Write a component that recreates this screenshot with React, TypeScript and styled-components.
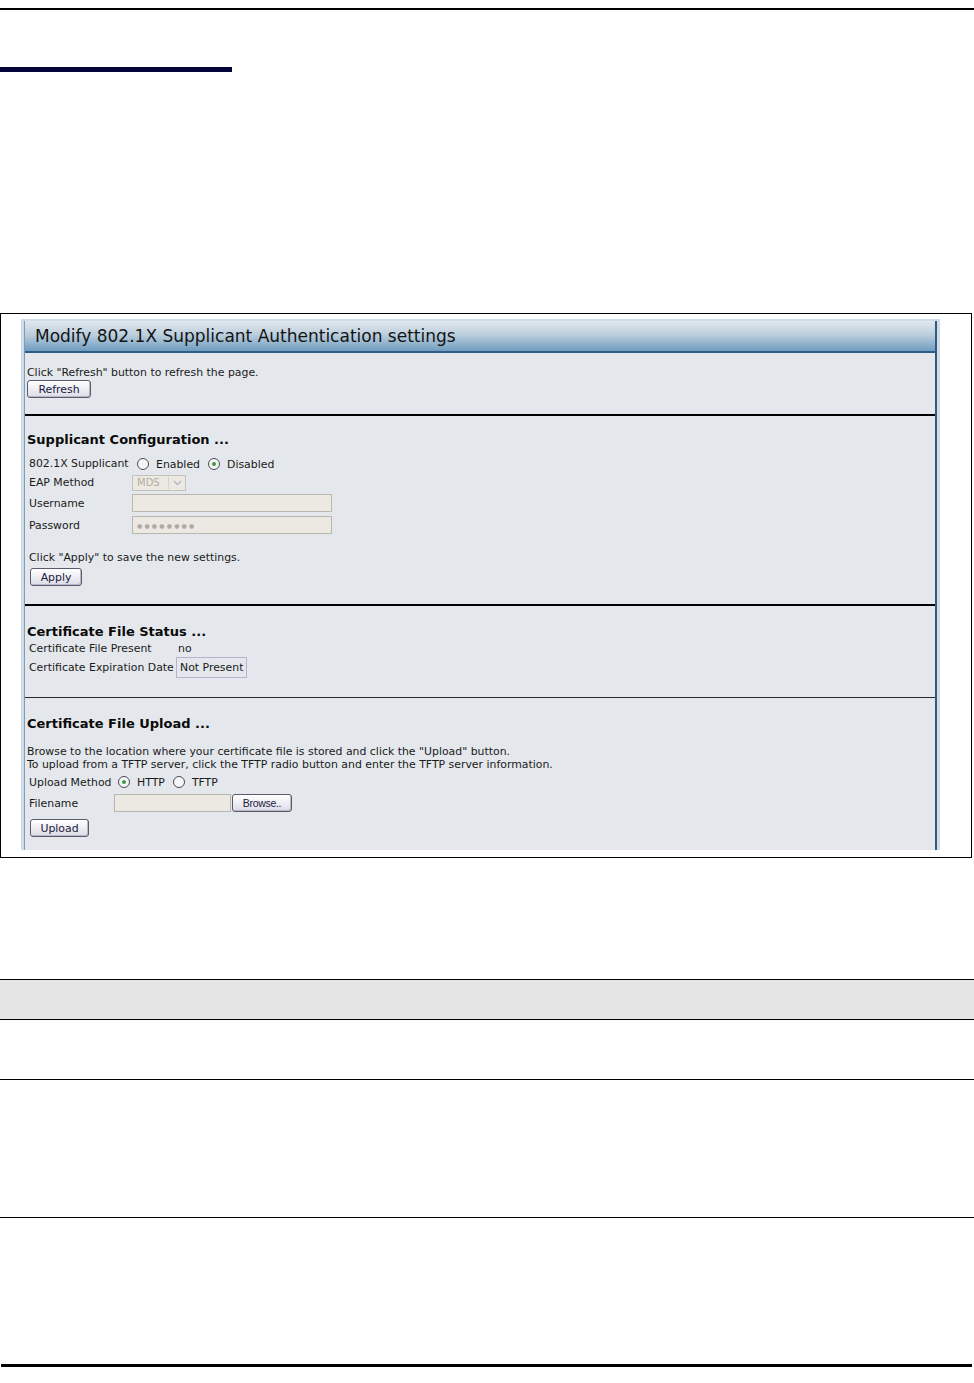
import { FunctionComponent } from "react";
import styled, { createGlobalStyle } from "styled-components";

const GlobalStyle = createGlobalStyle`
    html, body {
        margin: 0;
        padding: 0;
        background: #ffffff;
    }
    body {
        font-family: "DejaVu Sans", Verdana, sans-serif;
        color: #111111;
    }
`;

const Page = styled.div`
    width: 974px;
    height: 1383px;
    display: flex;
    flex-direction: column;
    overflow: hidden;
`;

const TopRule = styled.div`
    margin-top: 8px;
    height: 2px;
    background: #000000;
`;

const ChapterBar = styled.div`
    margin-top: 57px;
    width: 232px;
    height: 5px;
    background: #05053a;
`;

const Figure = styled.div`
    margin-top: 241px;
    box-sizing: border-box;
    width: 972px;
    height: 545px;
    border: 1px solid #000000;
    padding: 5px 0 0 20px;
`;

const Panel = styled.div`
    width: 919px;
    height: 531px;
    box-sizing: border-box;
    padding: 2px 3px 0 3px;
    background: #cfdcea;
    overflow: hidden;
`;

const PanelInner = styled.div`
    height: 100%;
    background: #e4e8ec;
    border-left: 1px solid #7f9dba;
    border-right: 2px solid #35597c;
    display: flex;
    flex-direction: column;
`;

const TitleBar = styled.div`
    height: 30px;
    display: flex;
    align-items: center;
    padding-left: 10px;
    font-size: 17px;
    color: #141414;
    background: linear-gradient(#e2e8ee 0%, #bccfdd 45%, #6f9cc0 100%);
    border-bottom: 2px solid #2e5e85;
`;

const Body = styled.div`
    padding: 0 0 0 2px;
    display: flex;
    flex-direction: column;
`;

const Note = styled.div<{ $top?: number; $indent?: number }>`
    margin-top: ${(p) => p.$top ?? 0}px;
    padding-left: ${(p) => p.$indent ?? 0}px;
    font-size: 10.9px;
    line-height: 13px;
    color: #1a1a1a;
`;

const Button = styled.button<{ $width: number; $top?: number; $indent?: number }>`
    margin-top: ${(p) => p.$top ?? 0}px;
    margin-left: ${(p) => p.$indent ?? 0}px;
    width: ${(p) => p.$width}px;
    height: 18px;
    padding: 0;
    font-family: "DejaVu Sans", Verdana, sans-serif;
    font-size: 10.9px;
    color: #1a1a3a;
    background: linear-gradient(#ffffff, #dcdce8);
    border: 1px solid #5a5a6a;
    border-radius: 3px;
    box-shadow: inset -1px -1px 0 #b8b8c8;
`;

const Divider = styled.div<{ $top: number; $thin?: boolean }>`
    margin-top: ${(p) => p.$top}px;
    margin-left: -2px;
    height: ${(p) => (p.$thin ? 1 : 2)}px;
    background: ${(p) => (p.$thin ? "#2a2a2a" : "#000000")};
`;

const SectionTitle = styled.div<{ $top: number }>`
    margin-top: ${(p) => p.$top}px;
    font-size: 13px;
    font-weight: 700;
    line-height: 16px;
    color: #0a0a0a;
`;

const FieldGrid = styled.div<{ $top: number; $label: number; $rows: string }>`
    margin-top: ${(p) => p.$top}px;
    padding-left: 2px;
    display: grid;
    grid-template-columns: ${(p) => p.$label}px 1fr;
    grid-auto-rows: ${(p) => p.$rows};
    align-items: center;
    font-size: 10.9px;
    color: #1a1a1a;
`;

const FieldValue = styled.div<{ $offset?: number }>`
    display: flex;
    align-items: center;
    padding-left: ${(p) => p.$offset ?? 0}px;
`;

const RadioCircle = styled.span<{ $checked?: boolean }>`
    position: relative;
    flex: none;
    width: 12px;
    height: 12px;
    box-sizing: border-box;
    border: 1px solid #4a4a58;
    border-radius: 50%;
    background: #f6f6f6;
    margin-right: 7px;

    &::after {
        content: "";
        display: ${(p) => (p.$checked ? "block" : "none")};
        position: absolute;
        left: 3px;
        top: 3px;
        width: 4px;
        height: 4px;
        border-radius: 50%;
        background: #3a9c40;
    }
`;

const RadioText = styled.span`
    margin-right: 8px;
    margin-top: 1px;
`;

const DisabledSelect = styled.div`
    width: 54px;
    height: 16px;
    box-sizing: border-box;
    border: 1px solid #c6c2ba;
    background: #ece9e3;
    display: flex;
    align-items: center;
    font-size: 10px;
    color: #b4aca2;
    padding-left: 4px;
`;

const SelectArrow = styled.span`
    margin-left: auto;
    width: 16px;
    height: 12px;
    border-left: 1px solid #d6d2ca;
    display: flex;
    align-items: center;
    justify-content: center;
`;

const TextBox = styled.div<{ $width: number }>`
    width: ${(p) => p.$width}px;
    height: 18px;
    box-sizing: border-box;
    border: 1px solid #bab6b0;
    background: #ece9e3;
    font-size: 6px;
    letter-spacing: 2.2px;
    color: #b0aaa4;
    display: flex;
    align-items: center;
    padding-left: 4px;
`;

const ValueBox = styled.span`
    margin-left: -2px;
    padding: 3px 3px;
    border: 1px solid #b4b4cc;
`;

const BrowseButton = styled(Button)`
    margin-left: 1px;
    font-family: "Liberation Sans Narrow", "Liberation Sans", Arial, sans-serif;
    font-size: 10.5px;
    letter-spacing: -0.3px;
`;

const DocTable = styled.div`
    margin-top: 121px;
    display: flex;
    flex-direction: column;
`;

const DocRow = styled.div<{ $height: number; $head?: boolean }>`
    height: ${(p) => p.$height}px;
    border-top: 1px solid #000000;
    background: ${(p) => (p.$head ? "#e5e5e5" : "#ffffff")};
`;

const DocEnd = styled.div`
    border-top: 1px solid #000000;
`;

const BottomRule = styled.div`
    margin-top: 146px;
    margin-left: 1px;
    width: 971px;
    height: 3px;
    background: #000000;
`;

const Radio: FunctionComponent<{ label: string; checked?: boolean }> = ({ label, checked }) => (
    <>
        <RadioCircle $checked={checked} />
        <RadioText>{label}</RadioText>
    </>
);

export default function App() {
    return (
        <Page>
            <GlobalStyle />
            <TopRule />
            <ChapterBar />
            <Figure>
                <Panel>
                    <PanelInner>
                        <TitleBar>Modify 802.1X Supplicant Authentication settings</TitleBar>
                        <Body>
                            <Note $top={13}>Click "Refresh" button to refresh the page.</Note>
                            <Button $width={64} $top={1}>
                                Refresh
                            </Button>
                            <Divider $top={16} />

                            <SectionTitle $top={16}>Supplicant Configuration ...</SectionTitle>
                            <FieldGrid $top={6} $label={103} $rows="19px 19px 22px 22px">
                                <span>802.1X Supplicant</span>
                                <FieldValue $offset={5}>
                                    <Radio label="Enabled" />
                                    <Radio label="Disabled" checked />
                                </FieldValue>
                                <span>EAP Method</span>
                                <FieldValue>
                                    <DisabledSelect>
                                        MDS
                                        <SelectArrow>
                                            <svg width="9" height="6" viewBox="0 0 9 6">
                                                <path d="M1 1 L4.5 4.5 L8 1" fill="none" stroke="#b6b2c6" strokeWidth="1.3" />
                                            </svg>
                                        </SelectArrow>
                                    </DisabledSelect>
                                </FieldValue>
                                <span>Username</span>
                                <FieldValue>
                                    <TextBox $width={200} />
                                </FieldValue>
                                <span>Password</span>
                                <FieldValue>
                                    <TextBox $width={200}>&#9679;&#9679;&#9679;&#9679;&#9679;&#9679;&#9679;&#9679;</TextBox>
                                </FieldValue>
                            </FieldGrid>
                            <Note $top={15} $indent={2}>
                                Click "Apply" to save the new settings.
                            </Note>
                            <Button $width={52} $top={4} $indent={3}>
                                Apply
                            </Button>
                            <Divider $top={18} />

                            <SectionTitle $top={18}>Certificate File Status ...</SectionTitle>
                            <FieldGrid $top={1} $label={149} $rows="15px 22px">
                                <span>Certificate File Present</span>
                                <FieldValue>no</FieldValue>
                                <span>Certificate Expiration Date</span>
                                <FieldValue>
                                    <ValueBox>Not Present</ValueBox>
                                </FieldValue>
                            </FieldGrid>
                            <Divider $top={19} $thin />

                            <SectionTitle $top={18}>Certificate File Upload ...</SectionTitle>
                            <Note $top={13}>
                                Browse to the location where your certificate file is stored and click the "Upload" button.
                                <br />
                                To upload from a TFTP server, click the TFTP radio button and enter the TFTP server information.
                            </Note>
                            <FieldGrid $top={1} $label={85} $rows="20px 22px">
                                <span>Upload Method</span>
                                <FieldValue $offset={4}>
                                    <Radio label="HTTP" checked />
                                    <Radio label="TFTP" />
                                </FieldValue>
                                <span>Filename</span>
                                <FieldValue>
                                    <TextBox $width={117} />
                                    <BrowseButton $width={60}>Browse..</BrowseButton>
                                </FieldValue>
                            </FieldGrid>
                            <Button $width={59} $top={5} $indent={3}>
                                Upload
                            </Button>
                        </Body>
                    </PanelInner>
                </Panel>
            </Figure>
            <DocTable>
                <DocRow $height={39} $head />
                <DocRow $height={59} />
                <DocRow $height={137} />
                <DocEnd />
            </DocTable>
            <BottomRule />
        </Page>
    );
}
